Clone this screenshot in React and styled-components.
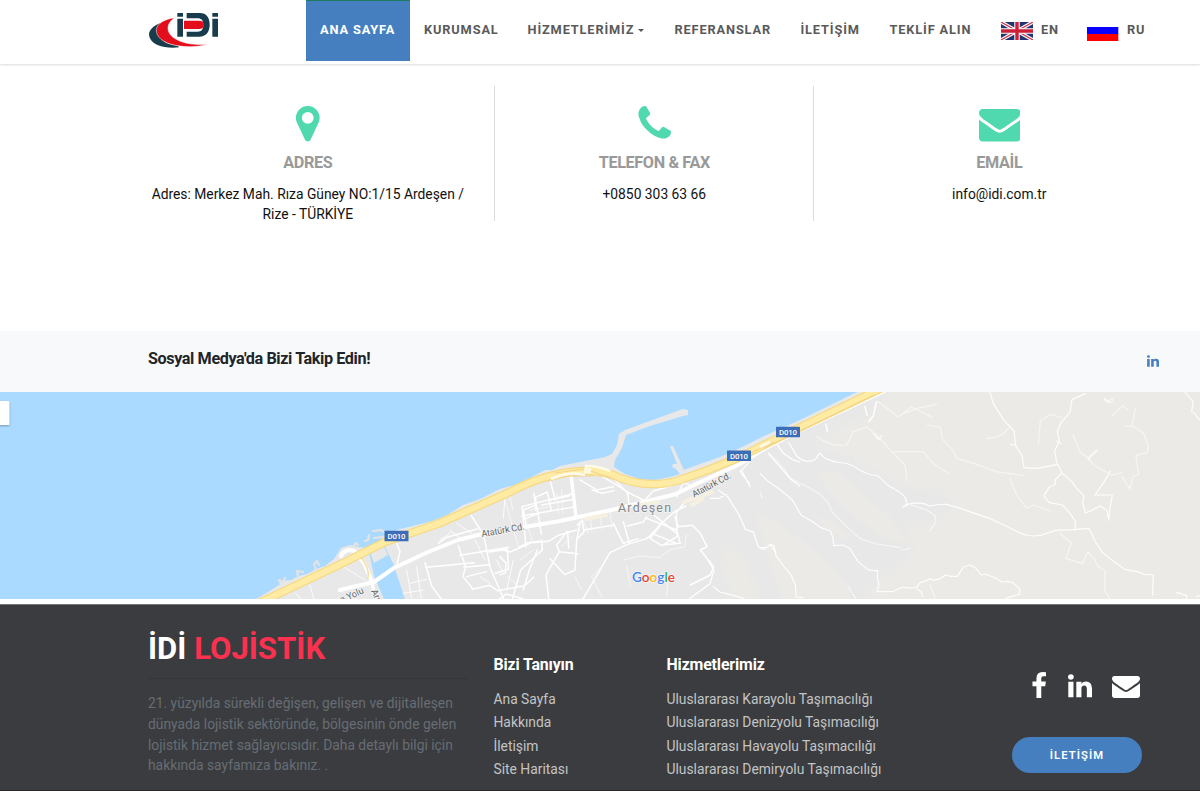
import React from 'react';
import styled, { createGlobalStyle, css } from 'styled-components';

const GlobalStyle = createGlobalStyle`
  * { box-sizing: border-box; }
  html, body { margin: 0; padding: 0; }
  body {
    width: 1200px;
    height: 791px;
    overflow: hidden;
    background: #fff;
    color: #111;
    font-family: Roboto, "Liberation Sans", sans-serif;
    font-size: 13.83px;
    line-height: 20.75px;
  }
`;

const Page = styled.div`
  display: flex;
  flex-direction: column;
  height: 791px;
`;

/* ---------- header ---------- */
const Header = styled.header`
  display: flex;
  height: 64px;
  flex: none;
  padding-left: 148px;
  background: #fff;
  box-shadow: 0 1px 2px rgba(0, 0, 0, 0.14);
`;

const Brand = styled.a`
  width: 158px;
  padding-top: 12px;
  svg { display: block; }
`;

const Nav = styled.nav`
  display: flex;
  height: 61px;
`;

const NavItem = styled.a`
  display: flex;
  align-items: center;
  width: ${(p) => p.$w}px;
  padding: 0 0 0 14px;
  color: #5a5a5a;
  font-size: 12.8px;
  font-weight: 700;
  letter-spacing: 0.85px;
  white-space: nowrap;
  ${(p) => p.$active && css`
    color: #fff;
    background: #467fbf;
    border-top: 1px solid #1c7a5c;
    padding-bottom: 1px;
  `}
  svg { flex: none; margin: 0 8px 0 0; }
`;

const Caret = styled.i`
  margin-left: 4px;
  border: 3.5px solid transparent;
  border-top-color: #555;
  border-bottom: 0;
`;

/* ---------- contact ---------- */
const Contact = styled.section`
  display: flex;
  height: 267px;
  flex: none;
  padding: 22px 0 0 121px;
`;

const ContactCard = styled.div`
  display: flex;
  flex-direction: column;
  align-items: center;
  width: ${(p) => p.$w}px;
  height: 135px;
  padding: 17px 0 0 0.6px;
  border-right: ${(p) => (p.$last ? 0 : 1)}px solid #dcdcdc;
  text-align: center;
  color: #111;
  svg { display: block; flex: none; fill: #50d8af; }
`;

const ContactTitle = styled.h3`
  flex: none;
  margin: 7.5px 0 10.6px;
  color: #999;
  font-size: 16.2px;
  font-weight: 700;
  line-height: 21px;
  letter-spacing: -0.35px;
`;

const ContactText = styled.p`
  flex: none;
  width: 330px;
  margin: 0;
`;

/* ---------- social strip ---------- */
const Social = styled.section`
  display: flex;
  align-items: center;
  justify-content: space-between;
  height: 61px;
  flex: none;
  padding: 0 40px 4px 148px;
  background: #f7f9fb;
  svg { display: block; margin-top: 2px; fill: #467fbf; }
`;

const SocialTitle = styled.h4`
  margin: 0;
  color: #212529;
  font-size: 16.2px;
  font-weight: 700;
  letter-spacing: -0.4px;
`;

/* ---------- map ---------- */
const MapFrame = styled.section`
  height: 212px;
  flex: none;
  border-bottom: 5px solid #fff;
  svg { display: block; }
`;

/* ---------- footer ---------- */
const FooterBar = styled.footer`
  display: flex;
  flex: 1;
  padding-left: 148px;
  background: #3b3c3f;
  border-top: 1px solid #77787a;
  border-bottom: 1px solid #2d2627;
`;

const About = styled.div`
  width: 345.5px;
  padding-top: 23px;
  color: #666d74;
`;

const FooterBrand = styled.h2`
  width: 320px;
  height: 51px;
  margin: 0 0 14px;
  border-bottom: 1px solid #343538;
  color: #fff;
  font-size: 31.1px;
  font-weight: 700;
  line-height: 41px;
  span { color: #fb314f; }
`;

const AboutText = styled.p`
  width: 320px;
  margin: 0;
`;

const LinkColumn = styled.div`
  width: ${(p) => p.$w}px;
  padding-top: 50px;
`;

const LinkTitle = styled.h4`
  margin: 0 0 12.7px;
  color: #fff;
  font-size: 15.9px;
  font-weight: 700;
  line-height: 20px;
  letter-spacing: -0.15px;
`;

const FooterLink = styled.a`
  display: block;
  color: #c3c4c5;
  line-height: 23.4px;
  white-space: nowrap;
`;

const FooterActions = styled.div`
  display: flex;
  flex-direction: column;
  align-items: center;
  width: 130px;
  padding-top: 67px;
`;

const IconRow = styled.div`
  display: flex;
  align-items: center;
  width: 130px;
  height: 28px;
  padding-left: 13px;
  svg { fill: #fff; margin-right: 12.5px; flex: none; }
  svg:nth-child(2) { margin-right: 18.5px; }
  svg:last-child { margin-right: 0; }
`;

const Button = styled.a`
  width: 130px;
  height: 36px;
  margin-top: 37px;
  border-radius: 18px;
  background: #467fbf;
  color: #fff;
  font-size: 11.24px;
  font-weight: 600;
  letter-spacing: 1.1px;
  line-height: 37px;
  text-align: center;
`;

/* ---------- icons ---------- */
const ICONS = {
  marker: 'M1152 640q0-106-75-181t-181-75-181 75-75 181 75 181 181 75 181-75 75-181zm256 0q0 109-33 179l-364 774q-16 33-47.5 52t-67.5 19-67.5-19-46.5-52l-365-774q-33-70-33-179 0-212 150-362t362-150 362 150 150 362z',
  phone: 'M1600 1240q0 27-10 70.5t-21 68.5q-21 50-122 106-94 51-186 51-27 0-53-3.5t-57.5-12.5-47-14.5-55.5-20.5-49-18q-98-35-175-83-127-79-264-216t-216-264q-48-77-83-175-3-9-18-49t-20.5-55.5-14.5-47-12.5-57.5-3.5-53q0-92 51-186 56-101 106-122 25-11 68.5-21t70.5-10q14 0 21 3 18 6 53 76 11 19 30 54t35 63.5 31 53.5q3 4 17.5 25t21.5 35.5 7 28.5q0 20-28.5 50t-62 55-62 53-28.5 46q0 9 5 22.5t8.5 20.5 14 24 11.5 19q76 137 174 235t235 174q2 1 19 11.5t24 14 20.5 8.5 22.5 5q18 0 46-28.5t53-62 55-62 50-28.5q14 0 28.5 7t35.5 21.5 25 17.5q25 15 53.5 31t63.5 35 54 30q70 35 76 53 3 7 3 21z',
  envelope: 'M1792 710v794q0 66-47 113t-113 47h-1472q-66 0-113-47t-47-113v-794q44 49 101 87 362 246 497 345 57 42 92.5 65.5t94.5 48 110 24.5h2q51 0 110-24.5t94.5-48 92.5-65.5q170-123 498-345 57-39 100-87zm0-294q0 79-49 151t-122 123q-376 261-468 325-10 7-42.5 31t-54 38.5-52 32.5-57.5 27-50 9h-2q-23 0-50-9t-57.5-27-52-32.5-54-38.5-42.5-31q-91-64-262-182.5t-205-142.5q-62-42-117-115.5t-55-136.5q0-78 41.5-130t118.5-52h1472q65 0 112.5 47t47.5 113z',
  facebook: 'M1343 12v264h-157q-86 0-116 36t-30 108v189h293l-39 296h-254v759h-306v-759h-255v-296h255v-218q0-186 104-288.5t277-102.5q147 0 228 12z',
  linkedin: 'M477 625v991h-330v-991h330zm21-306q1 73-50.5 122t-135.5 49h-2q-82 0-132-49t-50-122q0-74 51.5-122.5t134.5-48.5 133 48.5 51 122.5zm1166 729v568h-329v-530q0-105-40.5-164.5t-126.5-59.5q-63 0-105.5 34.5t-63.5 85.5q-11 30-11 81v553h-329q2-399 2-647t-1-296l-1-48h329v144h-2q20-32 41-56t56.5-52 87-43.5 114.5-15.5q171 0 275 113.5t104 332.5z',
};

const Icon = ({ name, size }) => (
  <svg width={size} height={size} viewBox="0 0 1792 1792"><path d={ICONS[name]} /></svg>
);

const Logo = () => (
  <svg width="72" height="37" viewBox="54 36 216 111">
    <path d="M92 69C70 77 58 89 57 103c1 20 18 33 47 38 15 3 29 3 43 1l-3-5c-28-2-48-12-54-28-5-13-4-27 2-40z" fill="#183c4c" />
    <path d="M134 53C101 58 82 71 79 88c-2 22 20 41 57 48 36 7 70 4 99-3-34 2-66-1-86-10-24-10-35-23-35-38 0-13 8-24 20-32z" fill="#e30d1c" stroke="#fff" strokeWidth="1.5" />
    <path d="M142 39h17v11h-17zM142 56h17v54h-17zM247 39h17v11h-17zM247 56h17v54h-17z" fill="#183c4c" />
    <path d="M170 39h40c19 0 29 14 29 34 0 24-11 37-31 37h-38V95h33c11 0 17-7 17-20 0-14-6-20-17-20h-33z" fill="#183c4c" />
    <path d="M162 62h45c10 0 15 4 15 12s-6 13-15 13h-45z" fill="#e30d1c" />
  </svg>
);

const FlagUK = () => (
  <svg width="32" height="18" viewBox="0 0 32 18">
    <path fill="#22336f" d="M0 0h32v18H0z" />
    <path d="M0 0l32 18M32 0L0 18" stroke="#fff" strokeWidth="3.6" />
    <path d="M0 0l32 18M32 0L0 18" stroke="#cf3c50" strokeWidth="1.3" />
    <path d="M16 0v18M0 9h32" stroke="#fff" strokeWidth="5.4" />
    <path d="M16 0v18M0 9h32" stroke="#cc1f38" strokeWidth="3.4" />
  </svg>
);

const FlagRU = () => (
  <svg width="32" height="21" viewBox="0 0 32 21">
    <path fill="#fff" d="M0 0h32v7H0z" />
    <path fill="#0a00ff" d="M0 7h31.3v7H0z" />
    <path fill="#f00" d="M0 14h31.3v7H0z" />
  </svg>
);

/* ---------- map drawing ---------- */
const Shield = ({ x, y }) => (
  <g>
    <rect x={x} y={y} width="24" height="10.5" rx="0.5" fill="#3b6db8" />
    <text x={x + 3} y={y + 8} fontSize="7.8" fontWeight="500" fill="#fff" textLength="18">D010</text>
  </g>
);

const Halo = styled.text`
  fill: #666;
  font-size: 9.2px;
  font-weight: 400;
  stroke: #f1f1f1;
  stroke-width: 2px;
  paint-order: stroke;
`;

const CityLabel = styled(Halo)`
  fill: #85878a;
  font-size: 12.4px;
`;

const COAST = 'M256 599L268 592 279 585 283 581 291 580 299 576 307 574 316 569 325 566 334 559 341 548 350 545 358 547 368 548 380 541 383 536 400 529 413 526 432 521 447 515 463 505 480 499 500 489 515 485 530 478 545 470 552 470 560 466 575 463 590 460 605 457 612 454 617 445 619 434 625 430 683 409 688 410 688 415 683 416 650 426 626 435 622 448 615 460 614 467 625 474 640 479 655 480 670 477 680 474 676 469 672 467 673 464 677 464 670 446 673 446 684 470 700 464 720 457 740 448 760 438 800 420 857 392H1200V599z';

const MapDrawing = () => (
  <svg width="1200" height="207" viewBox="0 392 1200 207" fill="none" strokeLinejoin="round" strokeLinecap="round" fontFamily="Roboto, sans-serif">
    <defs>
      <filter id="soft" x="-20%" y="-20%" width="140%" height="140%"><feGaussianBlur stdDeviation="5" /></filter>
      <filter id="cardShadow" x="-50%" y="-50%" width="200%" height="200%"><feDropShadow dx="0" dy="1" stdDeviation="1" floodOpacity="0.3" /></filter>
      <clipPath id="land"><path d={COAST} /></clipPath>
    </defs>
    <path fill="#aadaff" d="M0 392h1200v207H0z" />
    <path d={COAST} fill="#e8e8e8" />
    <path d="M281 584l-2-4 4 2 2-4M298 577l-1-6 6 1M316 570l-2-6 3-3 2 4M353 547l3-4 2 2M365 541l3-1 1-5M373 531l8-1 5 3M374 538l8-1" stroke="#e2e4e4" strokeWidth="2.2" />

    {/* hills */}
    <g clipPath="url(#land)">
      <path filter="url(#soft)" fill="#ebeae7" d="M895 385H1210V610H905L860 602 876 580 905 563 915 548 900 525 940 520 955 507 940 490 905 487 870 468 845 455 820 447 818 437 870 415z" />
      <g filter="url(#soft)" fill="#ebeae6" transform="translate(760 385) scale(.3333)">
        <path d="M170 258l60 0 70 60 90 80 60 80-60-10-90-60-90-80z" />
        <path d="M-10 390l60 20 80 60 80 70 60 70 0 40-200 0-40-110z" />
        <path d="M160 390l60 20 60 50-50 0z" />
      </g>
      <path filter="url(#soft)" fill="#ebeae5" d="M722 540l25 25 13 34h-30z" />
    </g>

    {/* river mouth */}
    <path fill="#aadaff" d="M369 550l14-5 5 10-14 8zM384 545l-15 7 5 24 10 23h21l-12-36z" />

    {/* streets of the western part */}
    <g transform="translate(240 460) scale(.3333)" stroke="#fff">
      <g strokeWidth="4.4">
        <path d="M693 165l38 60 20 100 40 92M555 308l20 70 30 40M558 322l145-14M655 258l22 62-8 30 28 35M595 250l25-18 92-25M470 250l10 24-10 45M660 286l60-10 86-14M748 276l54-8 4 60-40 12M672 322l75-8M680 350l60-15M697 388l52-12 24 16 80-14 28-26M778 418l20-16 50 14M836 262l26-14 38-4M850 150l10 50 40-12M850 150l36-14M882 100l6 50M852 178l48-20M892 270l-24 60-18 60" />
      </g>
      <g strokeWidth="2.6">
        <path d="M310 320l65 40M165 400l20 18M210 375l12 44M600 240l35-24M630 210l40 32M650 190l45 30M705 240l30 60M770 300l20 40M720 350l30 20M795 115l-5 60M820 300l-20 90M500 330l15 85M530 320l14 95M490 400l60-10M510 370l50-12" />
      </g>
    </g>

    {/* streets of the town centre */}
    <g transform="translate(500 390) scale(.3333)" stroke="#fff">
      <g strokeWidth="4.4">
        <path d="M66 350l150-38M66 350l12 120M66 378l160-28M106 322l18 110M106 322l36-16 12 55M148 330l60-12M150 270l16 60M125 345l90-16M0 478l30 8 65-28 50-4 30-18 55-16M200 425l-30 40 8 20-40 70 8 70M125 450l2 30-65 60-24 85M178 485l55 6M203 424l3 50M240 400l-10 50-5 90-30 14-45-48M232 405l15-14 5 35-20 20M340 400l30 60 45-14M370 395l18 65M250 420l90-14M0 500l18 20-2 30-16 4" />
        <path d="M248 628l42-70 40-70 50-24 60-18 14-12 28-32 46-40 30-14M440 385l90 35M455 370l75 60M440 380l-10 16-48 12M486 400l-36 45 36 22 46-28-3-70 22-30M455 430l70 28M525 380l10 30 42-4 24 24 20 40-20 10 40 50-10 25-60 30M533 430l8 30-50 4" />
        <path d="M345 270l38 40 5 40M240 270l50 30 50-10M276 300l30 10 36-8M300 255l90 55 40 20M430 335l30-32 88-25 20 6M530 320l18-38" />
      </g>
      <g strokeWidth="2.6" stroke="#f8f8f8">
        <path d="M15 330l40 140M30 320l8 40M80 400l20 60M90 360l60-10M170 310l6 60M185 300l4 70M215 440l-30 30M245 380l20 50M270 375l6 50M300 372l6 45M330 365l5 50M305 530l-30 30 30 60M380 530l12 60M370 510l50-12 60 5M480 500l30-20 45-10 4-35M500 620l4-60M225 560l20 40M60 510l40-30M20 560l40 30" />
      </g>
    </g>

    {/* hill roads */}
    <g transform="translate(760 385) scale(.3333)" stroke="#fdfdfd" strokeWidth="3.6">
      <path d="M85 172q15 20 23 38 15 18 35 19 18 0 25-8l10-17 15 14q25 14 60 16 25 5 45 20 25 15 55 18l35 32q40 20 48 35l5 18-12 10q25-15 45-12 18-2 35 8 25-6 50-5 40 10 70 22 35 12 60 20l100 48 28 5 25-2 45-15 50-2 50-4 20 42 20 30 35 28 35 24 35 6 20 8 28 2-2 60" />
      <path d="M0 265l22 22 40 28 35 30 26 45 38 22 22 16 28 10 8 20 2 24 28-2 20 10 25 40 30 24 24 4q2-5 5 0l-1 20 5 20-6 22 50-1 25-12 30 2 14-2 10-14 20-6 10-6 12 5 20-6 14-10 16 4 20 0 18-28 20-6 18 10 16 20 12-3 30 12 20 12 18-2 16 5 20 18-2 16-40 12M470 612l14 8 3 14" />
      <path d="M0 488l22 0 8-10 12 4 6 30 25 34 20 24 13 30 2 36 20 2" />
      <path d="M690 22l10 34 32 50 30 32 4 34 2 12 18 28 6 36 40 2 60-12M750 178l14 2M892 240l-8-42 14-30-6-30 12-26 26-30 6-38 40-18M890 168l14 8M894 240l12 24-20 20 0 14-18 8-16 26 15 20 40 8 24 26 15 24 0 26M906 264l30 26 12 18 24 24-4 20 8 32 20-8 24-14 20 14 7 30 2-32 8-44-52 0 28-40 18-32M1275 22l25 28-5 30 8 4 15 20M1250 622l30 10 0 12M1310 635l10-4" />
      <path d="M350 50l-10 42-12 16M315 65l6 25M198 118l4 20" strokeWidth="5" />
      <g stroke="#f5f5f4">
        <path d="M28 205l45 45 15 28 50 25 36 20 30 30 14 30 40 40 42 38 50 16 70 10M425 495l24-4" />
        <path d="M170 155q40 30 90 25l20-40 40-14 30 24 40 44 45 46 5 42M400 200l90 0 30 36 46 30M500 120l40 6 8 38 30 30 12 26 60 18 60 22 82 12M355 50l60 46 40-30 60 30M420 90l50-20 60-12M745 130q-20 30-66 30M835 178l6-70 30-20 35 10M750 280l20 50 30 40 20-10 50 18" />
      </g>
      <g stroke="#f6f6f5">
        <path d="M440 355l60 20 24 16 4 20-20 28M900 445l34 30-16 45 50 16 15-35 20 20 10 22 22 14 0 60 20 34M1034 40l10 12 12-12 6 14M1058 90l30-28 14 12M1126 72l-10 52-20 0M1120 124l30 20 16 40-4 18-34 10 8 56-18 8-8 36-24-38M1054 270l32-6M984 220l28-24M984 220l16 20 56 30M940 150l20 50 30 24M0 320l6 20M265 605l22 36M510 600l15 40" />
      </g>
      <path d="M340 145l16 20 10-14M1034 44l18 8M1010 196l-26 26" />
    </g>
    <g transform="translate(500 390) scale(.3333)" stroke="#fff" strokeWidth="3.6">
      <path d="M632 325l24 0 26-12M655 300l28 20 35 56 18 42 24 8 15 45 20 8M812 466l14 20M725 240l25 50M750 215l-30 30 28 35M805 190l70 80 25 18M830 160l20 30 30 20 20 6M640 590l20 16 70 18M570 625l60-44 12-40-18-30" />
    </g>

    {/* Atatürk avenue */}
    <path d="M340 590l34-8 20-14 34-16 30-12 20-5 22-4M525 527l35-6 56-12 60-15 20-10 44-20 26-16 35-18 96-45" stroke="#fff" strokeWidth="4" />
    <path d="M571 475l5 42M372 582l3 17" stroke="#fff" strokeWidth="3.4" />
    <path d="M341 556q4-8 13-5l10 12 8 19" stroke="#fff" strokeWidth="4.2" />
    <path d="M360 556q10 12 8 22" stroke="#f6df9c" strokeWidth="1.5" />
    <path d="M684 502l28-10M692 505l10-6M586 519l20-4M640 505l18-3" stroke="#f5f0df" strokeWidth="4" />

    {/* D010 highway */}
    <g strokeLinecap="butt">
      <path d="M255 605L345 562 385 542 440 523 510 492Q545 473 582 471 605 470 620 478 650 489 680 480 710 470 738 458L782 436 882 388" stroke="#f5d982" strokeWidth="8.5" />
      <path d="M255 605L345 562 385 542 440 523 510 492Q545 473 582 471 605 470 620 478 650 489 680 480 710 470 738 458L782 436 882 388" stroke="#ffeba3" strokeWidth="6.2" />
      <path d="M555 473l30-4 26 9M736 460l38-18M764 448l110-53M548 481l20-5 25 0" stroke="#efd185" strokeWidth="0.9" />
      <path d="M551 479q18-8 34-4M585 466q14 0 25 5M760 447l10-5" stroke="#fffbea" strokeWidth="2.6" />
      <path d="M584 470l7 1" stroke="#fff9dd" strokeWidth="6" />
    </g>

    <Shield x={384.5} y={530.7} />
    <Shield x={727} y={450.6} />
    <Shield x={776} y={426.8} />
    <Halo transform="translate(482 537) rotate(-10)" textLength="43.5">Atatürk Cd.</Halo>
    <Halo transform="translate(694 497.5) rotate(-28)" textLength="42.5">Atatürk Cd.</Halo>
    <Halo transform="translate(337 605) rotate(-24)" textLength="30">na Yolu</Halo>
    <Halo transform="translate(371 591) rotate(66)">Arı</Halo>
    <CityLabel x="618" y="512" textLength="53">Ardeşen</CityLabel>
    <text x="632" y="581.5" fontFamily="Lato, sans-serif" fontSize="13.6" fontWeight="600" textLength="43" stroke="#f5f5f5" strokeWidth="1.5" style={{ paintOrder: 'stroke' }}>
      <tspan fill="#4285f4">G</tspan><tspan fill="#ea4335">o</tspan><tspan fill="#fbbc05">o</tspan><tspan fill="#4285f4">g</tspan><tspan fill="#34a853">l</tspan><tspan fill="#ea4335">e</tspan>
    </text>
    <rect x="-10" y="401" width="19.3" height="24" rx="1" fill="#fff" filter="url(#cardShadow)" />
  </svg>
);

export default function App() {
  return (
    <Page>
      <GlobalStyle />
      <Header>
        <Brand><Logo /></Brand>
        <Nav>
          <NavItem $w={104} $active>ANA SAYFA</NavItem>
          <NavItem $w={103.5}>KURUMSAL</NavItem>
          <NavItem $w={147}>HİZMETLERİMİZ<Caret /></NavItem>
          <NavItem $w={126}>REFERANSLAR</NavItem>
          <NavItem $w={89}>İLETİŞİM</NavItem>
          <NavItem $w={111.5}>TEKLİF ALIN</NavItem>
          <NavItem $w={86}><FlagUK />EN</NavItem>
          <NavItem $w={86}><FlagRU />RU</NavItem>
        </Nav>
      </Header>
      <Contact>
        <ContactCard $w={374}>
          <Icon name="marker" size={41.5} />
          <ContactTitle>ADRES</ContactTitle>
          <ContactText>Adres: Merkez Mah. Rıza Güney NO:1/15 Ardeşen / Rize - TÜRKİYE</ContactText>
        </ContactCard>
        <ContactCard $w={319}>
          <Icon name="phone" size={41.5} />
          <ContactTitle>TELEFON &amp; FAX</ContactTitle>
          <ContactText>+0850 303 63 66</ContactText>
        </ContactCard>
        <ContactCard $w={370} $last>
          <Icon name="envelope" size={41.5} />
          <ContactTitle>EMAİL</ContactTitle>
          <ContactText>info@idi.com.tr</ContactText>
        </ContactCard>
      </Contact>
      <Social>
        <SocialTitle>Sosyal Medya'da Bizi Takip Edin!</SocialTitle>
        <Icon name="linkedin" size={14} />
      </Social>
      <MapFrame><MapDrawing /></MapFrame>
      <FooterBar>
        <About>
          <FooterBrand>İDİ <span>LOJİSTİK</span></FooterBrand>
          <AboutText>21. yüzyılda sürekli değişen, gelişen ve dijitalleşen dünyada lojistik sektöründe, bölgesinin önde gelen lojistik hizmet sağlayıcısıdır. Daha detaylı bilgi için hakkında sayfamıza bakınız. .</AboutText>
        </About>
        <LinkColumn $w={173}>
          <LinkTitle>Bizi Tanıyın</LinkTitle>
          <FooterLink>Ana Sayfa</FooterLink>
          <FooterLink>Hakkında</FooterLink>
          <FooterLink>İletişim</FooterLink>
          <FooterLink>Site Haritası</FooterLink>
        </LinkColumn>
        <LinkColumn $w={345.5}>
          <LinkTitle>Hizmetlerimiz</LinkTitle>
          <FooterLink>Uluslararası Karayolu Taşımacılığı</FooterLink>
          <FooterLink>Uluslararası Denizyolu Taşımacılığı</FooterLink>
          <FooterLink>Uluslararası Havayolu Taşımacılığı</FooterLink>
          <FooterLink>Uluslararası Demiryolu Taşımacılığı</FooterLink>
        </LinkColumn>
        <FooterActions>
          <IconRow>
            <Icon name="facebook" size={28} />
            <Icon name="linkedin" size={28} />
            <Icon name="envelope" size={28} />
          </IconRow>
          <Button>İLETİŞİM</Button>
        </FooterActions>
      </FooterBar>
    </Page>
  );
}
